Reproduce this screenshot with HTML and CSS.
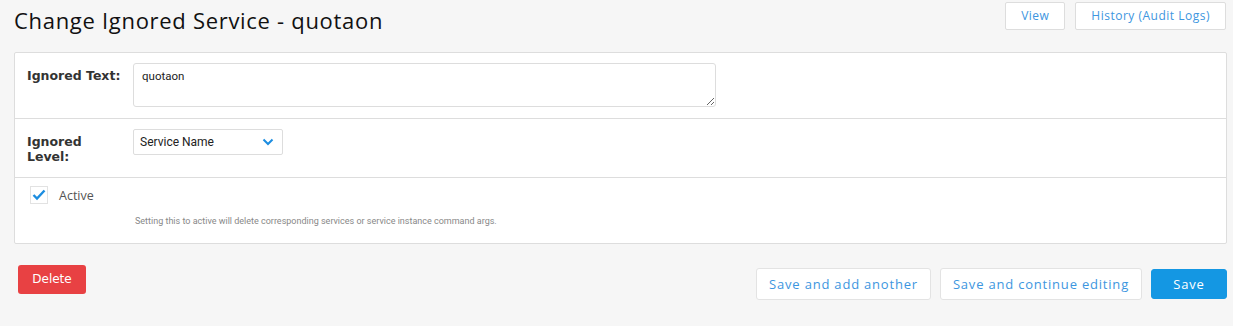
FILE: index.html
```html
<!DOCTYPE html>
<html lang="en">
<head>
    <meta charset="UTF-8">
    <title>Change Ignored Service</title>
    <link rel="stylesheet" href="styles.css">
</head>
<body>
    <div id="page">
        <div class="head">
            <h1>Change Ignored Service - quotaon</h1>
            <ul class="tools">
                <li><a href="#">View</a></li>
                <li><a href="#">History (Audit Logs)</a></li>
            </ul>
        </div>
        <form class="panel">
            <div class="row">
                <label class="lbl">Ignored Text:</label>
                <div class="field"><textarea>quotaon</textarea></div>
            </div>
            <div class="row">
                <label class="lbl">Ignored<br>Level:</label>
                <div class="field">
                    <div class="select">
                        <span>Service Name</span>
                        <svg width="12" height="8" viewBox="0 0 12 8"><path d="M1.5 1.5 L6 6 L10.5 1.5" fill="none" stroke="#1c8de0" stroke-width="2"/></svg>
                    </div>
                </div>
            </div>
            <div class="row last">
                <div class="check">
                    <span class="box"><svg width="14" height="12" viewBox="0 0 14 12"><path d="M1.5 6 L5 9.5 L12.5 1.5" fill="none" stroke="#1c8de0" stroke-width="2.4"/></svg></span>
                    <span class="ctext">Active</span>
                </div>
                <p class="help">Setting this to active will delete corresponding services or service instance command args.</p>
            </div>
        </form>
        <div class="submit">
            <a href="#" class="del">Delete</a>
            <div class="saves">
                <a href="#" class="btn">Save and add another</a>
                <a href="#" class="btn">Save and continue editing</a>
                <a href="#" class="btn primary">Save</a>
            </div>
        </div>
    </div>
</body>
</html>
```

FILE: styles.css
```css
/* change form */
body{margin:0; background:#f6f6f6; font-family:"Open Sans", sans-serif;}
#page{padding:0 6px 0 14px;}

.head{display:flex; justify-content:space-between; align-items:flex-start; height:52px;}
.head h1{margin:7px 0 0; font-size:22px; font-weight:400; color:#111; letter-spacing:0.7px; line-height:26px;}
.tools{list-style:none; margin:2px 1px 0 0; padding:0; display:flex; gap:10px;}
.tools a{display:block; height:26px; line-height:26px; padding:0 15px; background:#fff; border:1px solid #ddd; border-radius:2px;
    color:#3d96e0; font-size:12px; text-decoration:none; letter-spacing:0.5px;}

.panel{display:block; background:#fff; border:1px solid #ddd; border-radius:2px;}
.row{display:flex; padding:10px 12px 11px; border-bottom:1px solid #ddd;}
.row.last{display:block; border-bottom:0; padding:8px 12px 16px 15px;}
.lbl{width:106px; padding:5px 0 2px; font-family:"DejaVu Sans", Verdana, sans-serif; font-weight:bold; font-size:12.5px; line-height:15px; color:#333;}
.field{flex:1;}
textarea{display:block; width:583px; height:44px; box-sizing:border-box; margin:0; padding:5px 8px; border:1px solid #ddd; border-radius:3px;
    font-family:Roboto, sans-serif; font-size:11.5px; color:#222; resize:vertical;}
.select{display:flex; align-items:center; justify-content:space-between; width:150px; height:26px; box-sizing:border-box; padding:0 8px 0 6px;
    border:1px solid #ddd; border-radius:2px; font-family:Roboto, sans-serif; font-size:12px; color:#222;}

.check{display:flex; align-items:center; gap:11px;}
.box{display:flex; align-items:center; justify-content:center; width:16px; height:16px; border:1px solid #e2e2e2; background:#fff;}
.ctext{font-family:"Open Sans", sans-serif; font-size:12.5px; color:#555;}
.help{margin:12px 0 0 105px; font-family:Roboto, sans-serif; font-size:9px; color:#888; line-height:11px;}

.submit{display:flex; justify-content:space-between; align-items:flex-start; padding:21px 0 0 4px;}
.del{display:block; width:68px; height:29px; line-height:29px; text-align:center; background:#e84143; color:#fff; border-radius:3px;
    font-family:"DejaVu Sans", Verdana, sans-serif; font-size:12px; text-decoration:none;}
.saves{display:flex; gap:9px; margin-top:3px;}
.btn{display:block; height:30px; line-height:30px; padding:0 12px; background:#fff; border:1px solid #e3e3e3; border-radius:3px;
    color:#3d96e0; font-size:13px; letter-spacing:0.8px; text-decoration:none;}
.btn.primary{width:50px; text-align:center; background:#1497e3; border-color:#1497e3; color:#fff; margin-top:1px; height:28px; line-height:28px;}
```
